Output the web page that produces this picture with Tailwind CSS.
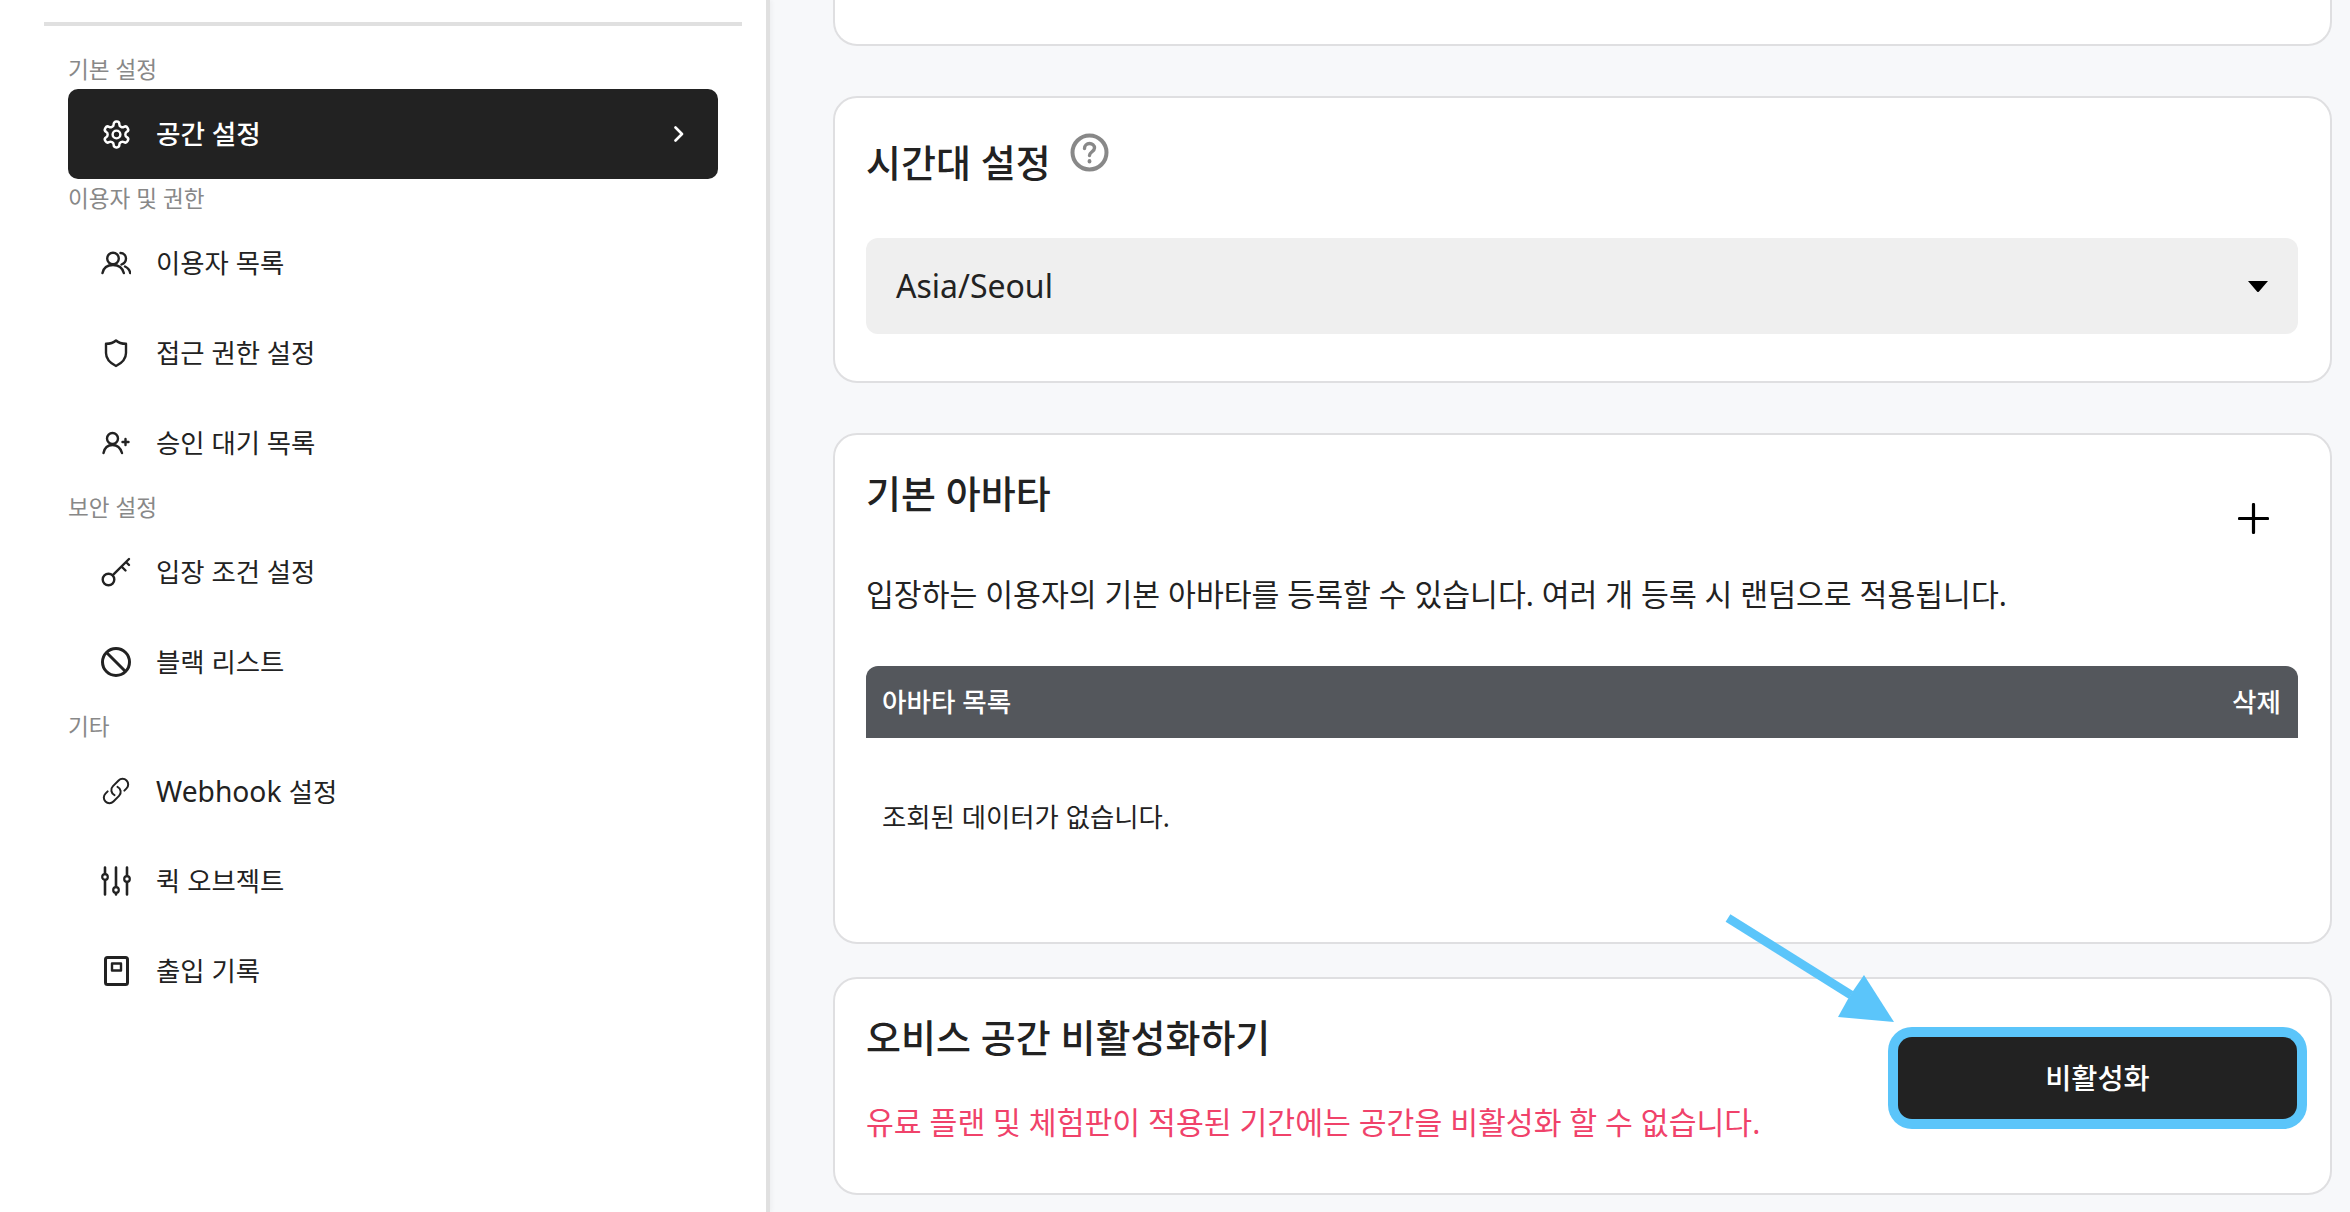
<!DOCTYPE html>
<html lang="ko">
<head>
  <meta charset="UTF-8" />
  <title>공간 설정</title>
  <script src="https://cdn.jsdelivr.net/npm/@tailwindcss/browser@4"></script>
</head>
<body class="relative flex h-screen overflow-hidden bg-[#f7f8fa] text-[#222222] font-['Noto_Sans','Noto_Sans_CJK_KR',sans-serif]">

  <!-- sidebar -->
  <aside class="w-[770px] shrink-0 bg-white border-r-4 border-[#e0e0e0] shadow-[2px_0_4px_rgba(0,0,0,0.04)] pt-[22px] pl-[44px] pr-[24px]">
    <div class="h-[4px] bg-[#e0e0e0]"></div>
    <nav class="mt-[24px] px-[24px]">
      <p class="h-[39px] flex items-center text-[22.6px] text-[#888888]">기본 설정</p>
      <a class="h-[90px] flex items-center pl-[33px] pr-[33px] rounded-[10px] bg-[#222222] text-white">
        <svg class="w-[31px] h-[31px] shrink-0" viewBox="0 0 24 24" fill="none" stroke="currentColor" stroke-width="1.9" stroke-linecap="round" stroke-linejoin="round"><path d="M12.22 2h-.44a2 2 0 0 0-2 2v.18a2 2 0 0 1-1 1.73l-.43.25a2 2 0 0 1-2 0l-.15-.08a2 2 0 0 0-2.73.73l-.22.38a2 2 0 0 0 .73 2.73l.15.1a2 2 0 0 1 1 1.72v.51a2 2 0 0 1-1 1.74l-.15.09a2 2 0 0 0-.73 2.73l.22.38a2 2 0 0 0 2.73.73l.15-.08a2 2 0 0 1 2 0l.43.25a2 2 0 0 1 1 1.73V20a2 2 0 0 0 2 2h.44a2 2 0 0 0 2-2v-.18a2 2 0 0 1 1-1.73l.43-.25a2 2 0 0 1 2 0l.15.08a2 2 0 0 0 2.73-.73l.22-.39a2 2 0 0 0-.73-2.73l-.15-.08a2 2 0 0 1-1-1.74v-.5a2 2 0 0 1 1-1.74l.15-.09a2 2 0 0 0 .73-2.73l-.22-.38a2 2 0 0 0-2.73-.73l-.15.08a2 2 0 0 1-2 0l-.43-.25a2 2 0 0 1-1-1.73V4a2 2 0 0 0-2-2z"/><circle cx="12" cy="12" r="3"/></svg>
        <span class="ml-[24px] pt-[2px] text-[26.6px] font-medium">공간 설정</span>
        <svg class="ml-auto w-[12px] h-[16px]" viewBox="0 0 12 16" fill="none" stroke="currentColor" stroke-width="2.6" stroke-linecap="round" stroke-linejoin="round"><path d="M2.5 1.5 9 8l-6.5 6.5"/></svg>
      </a>

      <p class="h-[39px] flex items-center text-[22.6px] text-[#888888]">이용자 및 권한</p>
      <a class="h-[90px] flex items-center pl-[33px]">
        <svg class="w-[30px] h-[30px] shrink-0" viewBox="0 0 30 30" fill="none" stroke="currentColor" stroke-width="2.4" stroke-linecap="round"><circle cx="12" cy="10.5" r="5.8"/><path d="M1.5 25C2.5 20 6.5 17 12 17s9.5 3 10.8 8M19.5 5c3.5 0 5.5 3 5.500 5.500s-2 5-4.500 6M24 18.500c3 1.500 4.800 3.700 5.200 6.500"/></svg>
        <span class="ml-[25px] pt-[2px] text-[26.4px]">이용자 목록</span>
      </a>
      <a class="h-[90px] flex items-center pl-[33px]">
        <svg class="w-[30px] h-[30px] shrink-0" viewBox="0 0 30 30" fill="none" stroke="currentColor" stroke-width="2.400" stroke-linejoin="round"><path d="M15 2.500c2.500 2.300 6 3.300 10 3.300V15c0 6-4 10-10 13C9 25 5 21 5 15V5.800c4 0 7.500-1 10-3.300Z"/></svg>
        <span class="ml-[25px] pt-[2px] text-[26.4px]">접근 권한 설정</span>
      </a>
      <a class="h-[90px] flex items-center pl-[33px]">
        <svg class="w-[30px] h-[30px] shrink-0" viewBox="0 0 30 30" fill="none" stroke="currentColor" stroke-width="2.400" stroke-linecap="round"><circle cx="11.500" cy="10.500" r="5.500"/><path d="M2.500 25c1-5 4.500-8 9-8s8 3 9.500 8M24.500 11v6M21.500 14h6"/></svg>
        <span class="ml-[25px] pt-[2px] text-[26.4px]">승인 대기 목록</span>
      </a>

      <p class="h-[39px] flex items-center text-[22.6px] text-[#888888]">보안 설정</p>
      <a class="h-[90px] flex items-center pl-[33px]">
        <svg class="w-[30px] h-[30px] shrink-0" viewBox="0 0 30 30" fill="none" stroke="currentColor" stroke-width="2.400" stroke-linecap="round"><circle cx="7.500" cy="22.500" r="5.800"/><path d="M11.800 18.200 28 2M20.500 9.500l4 4M25 5l3 3"/></svg>
        <span class="ml-[25px] pt-[2px] text-[26.4px]">입장 조건 설정</span>
      </a>
      <a class="h-[90px] flex items-center pl-[33px]">
        <svg class="w-[30px] h-[30px] shrink-0" viewBox="0 0 30 30" fill="none" stroke="currentColor" stroke-width="3"><circle cx="15" cy="15" r="13.500"/><path d="M5.500 5.500l19 19"/></svg>
        <span class="ml-[25px] pt-[2px] text-[26.4px]">블랙 리스트</span>
      </a>

      <p class="h-[39px] flex items-center text-[22.6px] text-[#888888]">기타</p>
      <a class="h-[90px] flex items-center pl-[33px]">
        <svg class="w-[30px] h-[30px] shrink-0" viewBox="0 0 24 24" fill="none" stroke="currentColor" stroke-width="1.600" stroke-linecap="round" stroke-linejoin="round"><path d="M13.190 8.688a4.500 4.500 0 0 1 1.242 7.244l-4.500 4.500a4.500 4.500 0 0 1-6.364-6.364l1.757-1.757m13.350-.622 1.757-1.757a4.500 4.500 0 0 0-6.364-6.364l-4.500 4.500a4.500 4.500 0 0 0 1.242 7.244"/></svg>
        <span class="ml-[25px] text-[28.2px]">Webhook <span class="text-[26.4px]">설정</span></span>
      </a>
      <a class="h-[90px] flex items-center pl-[33px]">
        <svg class="w-[30px] h-[30px] shrink-0" viewBox="0 0 30 30" fill="none" stroke="currentColor" stroke-width="2.600" stroke-linecap="round"><path d="M4 1.500V8M4 14v14.500M15 1.500V21M15 27v1.500M26 1.500V10M26 16v12.500"/><circle cx="4" cy="11" r="2.800" stroke-width="2.200"/><circle cx="15" cy="24" r="2.800" stroke-width="2.200"/><circle cx="26" cy="13" r="2.800" stroke-width="2.200"/></svg>
        <span class="ml-[25px] pt-[2px] text-[26.4px]">퀵 오브젝트</span>
      </a>
      <a class="h-[90px] flex items-center pl-[33px]">
        <svg class="w-[30px] h-[30px] shrink-0" viewBox="0 0 30 30" fill="none" stroke="currentColor" stroke-linejoin="round"><rect x="4.500" y="1.500" width="22" height="27" rx="2" stroke-width="3"/><rect x="11" y="7.500" width="9" height="7" stroke-width="2.400"/></svg>
        <span class="ml-[25px] pt-[2px] text-[26.4px]">출입 기록</span>
      </a>
    </nav>
  </aside>

  <!-- main -->
  <main class="flex-1 pl-[63px] pr-[18px]">
    <div class="h-[46px] bg-white border-2 border-t-0 border-[#dfdfe1] rounded-b-[24px]"></div>

    <section class="mt-[50px] bg-white border-2 border-[#dfdfe1] rounded-[24px] pl-[31px] pr-[32px] pt-[39px] pb-[47px]">
      <div class="flex items-start h-[50px]">
        <h2 class="text-[38px] leading-[50px] font-medium">시간대 설정</h2>
        <svg class="ml-[19px] -mt-[4px] w-[39px] h-[39px]" viewBox="0 0 39 39" fill="none" stroke="#888888" stroke-width="4" stroke-linecap="round"><circle cx="19.500" cy="19.500" r="17"/><path d="M14.500 15.500c0-3 2.300-5 5-5s5 2 5 4.500c0 3.500-5 4-5 7.500" stroke-width="3.400"/><path d="M19.500 28v.5" stroke-width="3.800"/></svg>
      </div>
      <div class="mt-[51px] h-[96px] rounded-[12px] bg-[#efefef] flex items-center justify-between pl-[30px] pr-[30px]">
        <span class="text-[32px]">Asia/Seoul</span>
        <svg class="w-[20px] h-[11px]" viewBox="0 0 20 11" fill="#000000"><path d="M0 0h20L11 10.500a1.300 1.300 0 0 1-2 0Z"/></svg>
      </div>
    </section>

    <section class="mt-[50px] bg-white border-2 border-[#dfdfe1] rounded-[24px] pl-[31px] pr-[32px] pt-[33px] pb-[105px]">
      <div class="flex items-start justify-between h-[50px]">
        <h2 class="text-[38px] leading-[50px] font-medium">기본 아바타</h2>
        <svg class="mt-[35px] mr-[29px] w-[31px] h-[31px]" viewBox="0 0 31 31" fill="none" stroke="#000000" stroke-width="3.200" stroke-linecap="round"><path d="M15.500 1.500v28M1.500 15.500h28"/></svg>
      </div>
      <p class="mt-[57px] text-[30.28px] leading-[40px]">입장하는 이용자의 기본 아바타를 등록할 수 있습니다. 여러 개 등록 시 랜덤으로 적용됩니다.</p>
      <div class="mt-[51px] h-[72px] rounded-t-[12px] bg-[#54575c] text-white flex items-center justify-between pl-[16px] pr-[17px] pt-[2px] text-[26.6px] font-medium">
        <span>아바타 목록</span>
        <span>삭제</span>
      </div>
      <p class="mt-[59px] pl-[16px] text-[26.4px] leading-[40px]">조회된 데이터가 없습니다.</p>
    </section>

    <section class="mt-[33px] bg-white border-2 border-[#dfdfe1] rounded-[24px] pl-[31px] pr-[33px] pt-[34px] pb-[50px] flex items-center justify-between">
      <div>
        <h2 class="-mt-[1px] text-[38px] leading-[50px] font-medium">오비스 공간 비활성화하기</h2>
        <p class="mt-[41px] text-[30.28px] leading-[40px] text-[#f0426a]">유료 플랜 및 체험판이 적용된 기간에는 공간을 비활성화 할 수 없습니다.</p>
      </div>
      <button class="w-[399px] h-[82px] rounded-[14px] bg-[#222222] ring-[10px] ring-[#5bc5fa] text-white text-[28.4px] font-medium">비활성화</button>
    </section>
  </main>

  <!-- callout arrow drawn over the page -->
  <svg class="absolute left-[1720px] top-[910px] w-[180px] h-[120px]" viewBox="1720 910 180 120" fill="#5bc5fa"><path d="M1728 918 1851 995" stroke="#5bc5fa" stroke-width="9"/><path d="M1864 975 1894 1022 1838 1017 1848 999 1853 991Z"/></svg>
</body>
</html>
